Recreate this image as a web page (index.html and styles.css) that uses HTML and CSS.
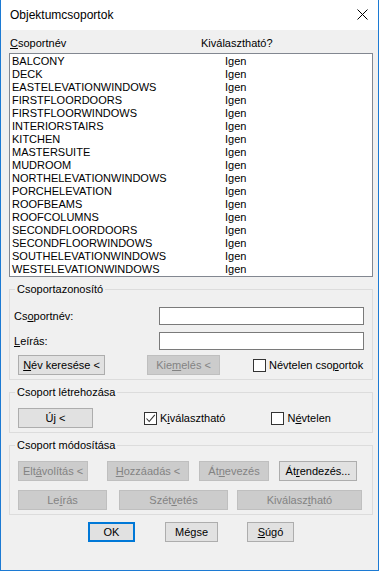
FILE: index.html
```html
<!DOCTYPE html>
<html lang="hu">
<head>
  <meta charset="UTF-8" />
  <title>Objektumcsoportok</title>
  <link rel="stylesheet" href="styles.css">
</head>
<body>
  <div class="window">
    <div class="titlebar">
      <span class="title">Objektumcsoportok</span>
      <svg class="close" width="11" height="11" viewBox="0 0 11 11">
        <path d="M0.5 0.5 L10.5 10.5 M10.5 0.5 L0.5 10.5" stroke="#000" stroke-width="1" fill="none"/>
      </svg>
    </div>

    <div class="content">
      <div class="list-header">
        <span class="col-name"><u>C</u>soportnév</span>
        <span>Kiválasztható?</span>
      </div>

      <div class="listbox">
        <div class="row"><span class="cell-name">BALCONY</span><span>Igen</span></div>
        <div class="row"><span class="cell-name">DECK</span><span>Igen</span></div>
        <div class="row"><span class="cell-name">EASTELEVATIONWINDOWS</span><span>Igen</span></div>
        <div class="row"><span class="cell-name">FIRSTFLOORDOORS</span><span>Igen</span></div>
        <div class="row"><span class="cell-name">FIRSTFLOORWINDOWS</span><span>Igen</span></div>
        <div class="row"><span class="cell-name">INTERIORSTAIRS</span><span>Igen</span></div>
        <div class="row"><span class="cell-name">KITCHEN</span><span>Igen</span></div>
        <div class="row"><span class="cell-name">MASTERSUITE</span><span>Igen</span></div>
        <div class="row"><span class="cell-name">MUDROOM</span><span>Igen</span></div>
        <div class="row"><span class="cell-name">NORTHELEVATIONWINDOWS</span><span>Igen</span></div>
        <div class="row"><span class="cell-name">PORCHELEVATION</span><span>Igen</span></div>
        <div class="row"><span class="cell-name">ROOFBEAMS</span><span>Igen</span></div>
        <div class="row"><span class="cell-name">ROOFCOLUMNS</span><span>Igen</span></div>
        <div class="row"><span class="cell-name">SECONDFLOORDOORS</span><span>Igen</span></div>
        <div class="row"><span class="cell-name">SECONDFLOORWINDOWS</span><span>Igen</span></div>
        <div class="row"><span class="cell-name">SOUTHELEVATIONWINDOWS</span><span>Igen</span></div>
        <div class="row"><span class="cell-name">WESTELEVATIONWINDOWS</span><span>Igen</span></div>
      </div>

      <!-- Csoportazonosító -->
      <fieldset class="group">
        <legend>Csoportazonosító</legend>
        <div class="form-row first">
          <span>Cs<u>o</u>portnév:</span>
          <input type="text" class="field">
        </div>
        <div class="form-row">
          <span><u>L</u>eírás:</span>
          <input type="text" class="field">
        </div>
        <div class="btn-row tight">
          <button class="btn w87"><u>N</u>év keresése &lt;</button>
          <button class="btn w73 disabled ml42">Kie<u>m</u>elés &lt;</button>
          <label class="check ml33"><span class="box"></span>Névtelen cso<u>p</u>ortok</label>
        </div>
      </fieldset>

      <!-- Csoport létrehozása -->
      <fieldset class="group">
        <legend>Csoport létrehozása</legend>
        <div class="btn-row first">
          <button class="btn w75">Ú<u>j</u> &lt;</button>
          <label class="check ml51">
            <span class="box">
              <svg width="11" height="11" viewBox="0 0 11 11"><path d="M1.5 5.5 L4.2 8.5 L9.8 1.8" stroke="#333" stroke-width="1.1" fill="none"/></svg>
            </span>K<u>i</u>választható
          </label>
          <label class="check ml46"><span class="box"></span>N<u>é</u>vtelen</label>
        </div>
      </fieldset>

      <!-- Csoport módosítása -->
      <fieldset class="group">
        <legend>Csoport módosítása</legend>
        <div class="btn-row first">
          <button class="btn w70 disabled">Elt<u>á</u>volítás &lt;</button>
          <button class="btn w82 disabled ml19"><u>H</u>ozzáadás &lt;</button>
          <button class="btn w70 disabled ml10">Át<u>n</u>evezés</button>
          <button class="btn w78 ml10">Át<u>r</u>endezés...</button>
        </div>
        <div class="btn-row second">
          <button class="btn w89 disabled">Le<u>í</u>rás</button>
          <button class="btn w109 disabled ml12">Szét<u>v</u>etés</button>
          <button class="btn w125 disabled ml9">Kiválasz<u>t</u>ható</button>
        </div>
      </fieldset>

      <div class="footer">
        <button class="btn w47 default">OK</button>
        <button class="btn w53 ml30">Mégse</button>
        <button class="btn w47 ml29"><u>S</u>úgó</button>
      </div>
    </div>
  </div>
</body>
</html>
```

FILE: styles.css
```css
body {
  margin: 0;
  font-family: "Liberation Sans", Arial, sans-serif;
  font-size: 11px;
  color: #000;
}

u {
  text-decoration-thickness: 1px;
  text-underline-offset: 1px;
}

.window {
  width: 379px;
  height: 571px;
  box-sizing: border-box;
  border: 1px solid #1c7ad3;
  border-top: none;
  background-color: #f0f0f0;
}

.titlebar {
  height: 30px;
  background-color: #fff;
  display: flex;
  align-items: center;
  justify-content: space-between;
  padding-left: 9px;
  padding-right: 10px;
}

.title {
  font-size: 12px;
}

.close {
  margin-top: -1px;
}

.content {
  padding-left: 8px;
}

.list-header {
  display: flex;
  line-height: 13px;
  margin-top: 7px;
  margin-bottom: 3px;
  padding-left: 1px;
}

.col-name {
  width: 191px;
}

/* List */
.listbox {
  width: 364px;
  height: 224px;
  box-sizing: border-box;
  border: 1px solid #828790;
  background-color: #fff;
  padding: 1px 0 0 2px;
}

.row {
  display: flex;
  line-height: 13px;
}

.cell-name {
  width: 213px;
}

/* Group boxes */
.group {
  width: 364px;
  box-sizing: border-box;
  margin: 6px 0 0 0;
  padding: 0 0 4px 0;
  border: 1px solid #dcdcdc;
  min-width: 0;
}

.group legend {
  margin-left: 5px;
  padding: 0 2px;
  line-height: 13px;
}

.form-row {
  display: flex;
  align-items: center;
  justify-content: space-between;
  padding-left: 4px;
  padding-right: 8px;
  margin-top: 7px;
}

.form-row.first {
  margin-top: 11px;
}

.field {
  width: 205px;
  height: 18px;
  box-sizing: border-box;
  border: 1px solid #7a7a7a;
  background-color: #fff;
  margin: 0;
  padding: 0 2px;
}

.btn-row {
  display: flex;
  align-items: center;
  padding-left: 8px;
}

.btn-row.tight {
  margin-top: 5px;
}

.btn-row.first {
  margin-top: 9px;
}

.btn-row.second {
  margin-top: 9px;
}

.btn {
  height: 20px;
  box-sizing: border-box;
  border: 1px solid #adadad;
  background-color: #e1e1e1;
  font-family: "Liberation Sans", Arial, sans-serif;
  font-size: 11px;
  color: #000;
  padding: 0;
  margin: 0;
}

.btn.disabled {
  background-color: #cccccc;
  border-color: #bfbfbf;
  color: #838383;
}

.btn.default {
  border: 2px solid #0078d7;
}

.check {
  display: flex;
  align-items: center;
}

.box {
  width: 13px;
  height: 13px;
  box-sizing: border-box;
  border: 1px solid #333;
  background-color: #fff;
  margin-right: 3px;
  display: flex;
  align-items: center;
  justify-content: center;
}

.footer {
  display: flex;
  padding-left: 79px;
  margin-top: 7px;
}

/* widths and gaps */
.w47 { width: 47px; }
.w53 { width: 53px; }
.w70 { width: 70px; }
.w73 { width: 73px; }
.w75 { width: 75px; }
.w78 { width: 78px; }
.w82 { width: 82px; }
.w87 { width: 87px; }
.w89 { width: 89px; }
.w109 { width: 109px; }
.w125 { width: 125px; }

.ml9 { margin-left: 9px; }
.ml10 { margin-left: 10px; }
.ml12 { margin-left: 12px; }
.ml19 { margin-left: 19px; }
.ml29 { margin-left: 29px; }
.ml30 { margin-left: 30px; }
.ml33 { margin-left: 33px; }
.ml42 { margin-left: 42px; }
.ml46 { margin-left: 46px; }
.ml51 { margin-left: 51px; }
```
